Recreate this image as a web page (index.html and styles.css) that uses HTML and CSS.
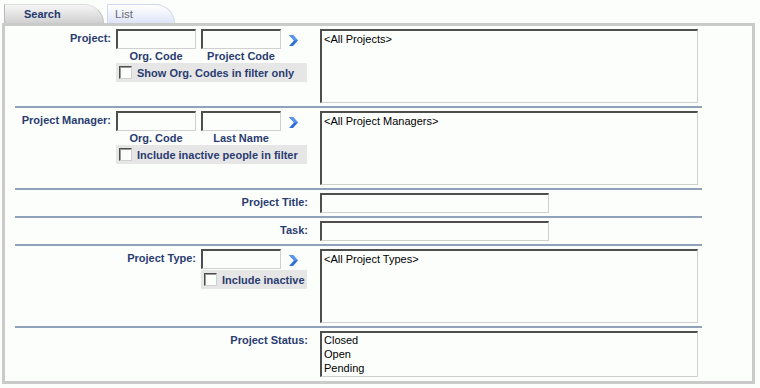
FILE: index.html
```html
<!DOCTYPE html>
<html>
<head>
<meta charset="utf-8">
<title>Search</title>
<link rel="stylesheet" href="styles.css">
</head>
<body>
<div class="tabs">
  <div class="tab tab-active">Search</div>
  <div class="tab tab-inactive">List</div>
</div>
<div class="frame">
  <div class="row row-list">
    <div class="label">Project:</div>
    <div class="input c2"></div>
    <div class="input c3"></div>
    <div class="arrow"><svg width="10" height="11" viewBox="0 0 10 11"><polygon points="0,0 4,0 9,5.5 4,11 0,11 5,5.5" fill="#2f6fd6"/><polygon points="0,0 4,0 9,5.5 5,5.5" fill="#5a95ee"/></svg></div>
    <div class="caption c2">Org. Code</div>
    <div class="caption c3">Project Code</div>
    <div class="check wide"><span class="box"></span>Show Org. Codes in filter only</div>
    <div class="listbox tall"><div class="opt">&lt;All Projects&gt;</div></div>
  </div>
  <div class="row row-list">
    <div class="label">Project Manager:</div>
    <div class="input c2"></div>
    <div class="input c3"></div>
    <div class="arrow"><svg width="10" height="11" viewBox="0 0 10 11"><polygon points="0,0 4,0 9,5.5 4,11 0,11 5,5.5" fill="#2f6fd6"/><polygon points="0,0 4,0 9,5.5 5,5.5" fill="#5a95ee"/></svg></div>
    <div class="caption c2">Org. Code</div>
    <div class="caption c3">Last Name</div>
    <div class="check wide"><span class="box"></span>Include inactive people in filter</div>
    <div class="listbox tall"><div class="opt">&lt;All Project Managers&gt;</div></div>
  </div>
  <div class="row row-line">
    <div class="label label-long">Project Title:</div>
    <div class="input long"></div>
  </div>
  <div class="row row-line">
    <div class="label label-long">Task:</div>
    <div class="input long"></div>
  </div>
  <div class="row row-type">
    <div class="label label-mid">Project Type:</div>
    <div class="input c3"></div>
    <div class="arrow"><svg width="10" height="11" viewBox="0 0 10 11"><polygon points="0,0 4,0 9,5.5 4,11 0,11 5,5.5" fill="#2f6fd6"/><polygon points="0,0 4,0 9,5.5 5,5.5" fill="#5a95ee"/></svg></div>
    <div class="check narrow"><span class="box"></span>Include inactive</div>
    <div class="listbox tall"><div class="opt">&lt;All Project Types&gt;</div></div>
  </div>
  <div class="row row-line last">
    <div class="label label-long">Project Status:</div>
    <div class="listbox status">
      <div class="opt">Closed</div>
      <div class="opt">Open</div>
      <div class="opt">Pending</div>
    </div>
  </div>
</div>
</body>
</html>
```
FILE: styles.css
```css
html, body {
  margin: 0;
  padding: 0;
  background: #fcfefc;
  font-family: "Liberation Sans", Arial, sans-serif;
  font-size: 11px;
}

.tabs {
  display: flex;
  gap: 3px;
  padding: 4px 0 0 4px;
  height: 19px;
}

.tab {
  height: 19px;
  line-height: 18px;
  box-sizing: border-box;
  border-top-right-radius: 20px 19px;
}

.tab-active {
  width: 100px;
  padding-left: 19px;
  font-weight: bold;
  color: #25386e;
  background: linear-gradient(#f6f6f6, #d0d0d0);
  border-left: 1px solid #b8b8b8;
  border-top: 1px solid #dcdcdc;
  border-right: 1px solid #c0c0c0;
}

.tab-inactive {
  width: 68px;
  padding-left: 7px;
  color: #6a6a78;
  font-size: 11.5px;
  background: linear-gradient(#ffffff, #f2f5fc 40%, #dde5f7);
  border: 1px solid #cfd8ee;
  border-bottom: none;
}

.frame {
  margin-left: 2px;
  width: 753px;
  box-sizing: border-box;
  border: 3px solid #c9cac9;
  padding: 0 0 0 10px;
}

.row {
  display: grid;
  grid-template-columns: 101px 85px 85px 34px 1fr;
  width: 687px;
  padding: 3px 0 3px;
  border-bottom: 2px solid #8fa2b9;
}

.row.last {
  border-bottom: none;
  padding-bottom: 4px;
}

.row-list {
  grid-template-rows: 20px 14px 19px auto;
}

.row-type {
  grid-template-rows: 20px 20px auto;
}

.label {
  grid-column: 1;
  grid-row: 1;
  text-align: right;
  padding: 2px 5px 0 0;
  line-height: 14px;
  font-weight: bold;
  color: #2a3c70;
}

.label-long {
  grid-column: 1 / 5;
  padding-right: 12px;
}

.label-mid {
  grid-column: 1 / 3;
}

.input {
  grid-row: 1;
  width: 80px;
  height: 20px;
  box-sizing: border-box;
  background: #fcfefc;
  border-style: solid;
  border-width: 2px 1px 1px 2px;
  border-color: #4e4e4e #d0d0d0 #d0d0d0 #4e4e4e;
}

.c2 { grid-column: 2; }
.c3 { grid-column: 3; }

.input.long {
  grid-column: 5;
  width: 229px;
}

.arrow {
  grid-column: 4;
  grid-row: 1;
  padding: 6px 0 0 3px;
}

.arrow svg { display: block; }

.caption {
  grid-row: 2;
  width: 80px;
  text-align: center;
  line-height: 14px;
  font-weight: bold;
  color: #2a3c70;
}

.check {
  display: flex;
  align-items: center;
  gap: 5px;
  height: 19px;
  margin-right: 13px;
  padding-left: 3px;
  background: #e6e6e6;
  font-weight: bold;
  color: #2a3c70;
}

.check.wide {
  grid-column: 2 / 5;
  grid-row: 3;
}

.check.narrow {
  grid-column: 3 / 5;
  grid-row: 2;
  margin-top: 1px;
}

.box {
  width: 13px;
  height: 13px;
  box-sizing: border-box;
  background: #fcfefc;
  border-style: solid;
  border-width: 1px;
  border-color: #4e4e4e #d0d0d0 #d0d0d0 #4e4e4e;
  box-shadow: inset 1px 1px 0 #9a9a9a;
}

.listbox {
  grid-column: 5;
  grid-row: 1 / -1;
  width: 378px;
  box-sizing: border-box;
  background: #fcfefc;
  border-style: solid;
  border-width: 2px 1px 1px 2px;
  border-color: #4e4e4e #d0d0d0 #d0d0d0 #4e4e4e;
  padding: 1px 2px;
  color: #000;
}

.listbox.tall { height: 74px; }

.listbox.status {
  grid-row: 1;
  height: 46px;
  padding: 0 2px;
}

.opt {
  line-height: 14px;
}
```
